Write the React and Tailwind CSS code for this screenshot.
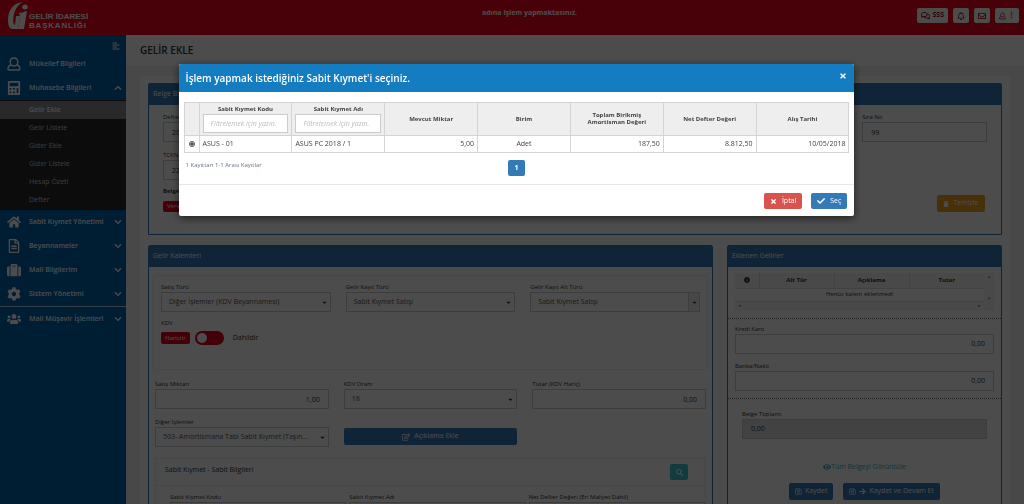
import React from 'react';
import {
  FaAlignLeft,
  FaArrowRight,
  FaCalculator,
  FaCaretDown,
  FaCheck,
  FaChevronDown,
  FaChevronUp,
  FaCog,
  FaEye,
  FaHome,
  FaInfoCircle,
  FaRegBell,
  FaRegComments,
  FaRegEdit,
  FaRegEnvelope,
  FaRegFileAlt,
  FaRegSave,
  FaSearch,
  FaSuitcase,
  FaTimes,
  FaTrash,
  FaUsers,
} from 'react-icons/fa';

const accountingLinks = ['Gelir Ekle', 'Gelir Listele', 'Gider Ekle', 'Gider Listele', 'Hesap Özeti', 'Defter'];

const lowerMenu = [
  { label: 'Sabit Kıymet Yönetimi', icon: FaHome },
  { label: 'Beyannameler', icon: FaRegFileAlt },
  { label: 'Mali Bilgilerim', icon: FaSuitcase },
  { label: 'Sistem Yönetimi', icon: FaCog },
  { label: 'Mali Müşavir İşlemleri', icon: FaUsers, separated: true },
];

const assetColumns = ['Mevcut Miktar', 'Birim', 'Toplam Birikmiş Amortisman Değeri', 'Net Defter Değeri', 'Alış Tarihi'];

function UserOutline({ size, className }) {
  return (
    <svg
      width={size}
      height={size}
      className={className}
      viewBox="0 0 14 14"
      fill="none"
      stroke="currentColor"
      strokeWidth="1.4"
      strokeLinejoin="round"
    >
      <path d="M7 1C4.6 1 3.2 2.6 3.2 4.8S4.6 9 7 9s3.8-2 3.8-4.2S9.4 1 7 1z" />
      <path d="M4.2 8C2 8.400 1 9.800 1 12c0 .6.4 1 1 1h10c.6 0 1-.4 1-1 0-2.200-1-3.600-3.200-4" />
    </svg>
  );
}

function Logo() {
  return (
    <a href="#" className="flex items-start gap-px text-white">
      <svg className="h-[28px] w-[20px]" viewBox="0 0 20 28" fill="currentColor">
        <path d="M15 0C5 1 0 8 0 18c0 5 1 8 4 9h6l2-13H8l-1 9c-2-1-2-4-1.500-7C6 9 9 3 15 0z" />
        <path d="M11 11c2 0 4-1 8-2l-3 18h-6l2-13z" />
        <ellipse cx="17" cy="5" rx="2.800" ry="2.500" />
      </svg>
      <span className="pt-[10px] font-['Liberation_Sans',sans-serif] text-[8px] leading-[9px] font-bold">
        GELİR İDARESİ
        <br />
        <span className="tracking-widest">BAŞKANLIĞI</span>
      </span>
    </a>
  );
}

function TopBar() {
  const button = 'flex h-[15px] items-center gap-0.5 rounded-xs bg-white px-1 text-[7px] font-bold text-[#a00018]';
  return (
    <header className="flex h-[35px] shrink-0 items-start bg-[#f00020] pr-[5px] pl-2">
      <div className="flex-1 pt-[2px]">
        <Logo />
      </div>
      <p className="pt-[7px] pl-8 text-[7px] leading-3 font-bold text-white">adına işlem yapmaktasınız.</p>
      <div className="flex flex-1 justify-end gap-[5px] pt-2">
        <button className={button}>
          <FaRegComments size={9} /> SSS
        </button>
        <button className={button} aria-label="Bildirimler">
          <FaRegBell size={8} />
        </button>
        <button className={button} aria-label="Mesajlar">
          <FaRegEnvelope size={8} />
        </button>
        <button className={`${button} w-6 justify-center`} aria-label="Kullanıcı">
          <UserOutline size={8} /> ⋮
        </button>
      </div>
    </header>
  );
}

function MenuItem({ label, icon: Icon, chevron: Chevron, separated }) {
  return (
    <a
      href="#"
      className={`flex items-center pr-1 pl-[7px] text-[7px] font-semibold ${separated ? 'h-[25px] border-t border-white/70' : 'h-6'}`}
    >
      <span className="flex w-[22px]">
        <Icon size={14} />
      </span>
      <span className="flex-1">{label}</span>
      {Chevron && <Chevron size={8} />}
    </a>
  );
}

function Sidebar() {
  return (
    <nav className="w-[126px] shrink-0 bg-[#0064ac] text-white">
      <div className="flex h-[17px] items-center justify-end pt-1 pr-1.5">
        <button aria-label="Menü">
          <FaAlignLeft size={8} />
        </button>
      </div>
      <MenuItem label="Mükellef Bilgileri" icon={UserOutline} />
      <MenuItem label="Muhasebe Bilgileri" icon={FaCalculator} chevron={FaChevronUp} />
      <ul className="bg-[#2a2a2a] py-px text-[7px] text-[#c8c8c8]">
        {accountingLinks.map((label, i) => (
          <li key={label}>
            <a
              href="#"
              className={`flex h-[18px] items-center pl-[29px] ${i === 0 ? 'bg-[#8a8a8a] font-semibold text-white' : ''}`}
            >
              {label}
            </a>
          </li>
        ))}
      </ul>
      {lowerMenu.map((item) => (
        <MenuItem key={item.label} {...item} chevron={FaChevronDown} />
      ))}
    </nav>
  );
}

function Panel({ title, className = '', children }) {
  return (
    <section className={`rounded-t-xs border border-[#337ab7] ${className}`}>
      <h2 className="flex h-[21px] items-center bg-[#337ab7] px-1 text-[7px] text-white">{title}</h2>
      {children}
    </section>
  );
}

function Field({ label, value, right, disabled }) {
  return (
    <label className="block">
      <span className="block h-[10px] text-[6px] leading-[10px]">{label}</span>
      <input
        defaultValue={value}
        disabled={disabled}
        className={`block h-5 w-full border border-[#ccc] px-2 text-[7px] ${right ? 'text-right' : ''} ${disabled ? 'bg-[#ddd]' : ''}`}
      />
    </label>
  );
}

function Select({ label, value, boxed }) {
  return (
    <label className="block min-w-0">
      <span className="block h-[10px] text-[6px] leading-[10px]">{label}</span>
      <span className="relative block">
        <select className="block h-5 w-full appearance-none truncate border border-[#ccc] pr-4 pl-[7px] text-[7px] text-[#555]">
          <option>{value}</option>
        </select>
        <span
          className={`pointer-events-none absolute inset-y-px right-px flex w-[11px] items-center justify-center ${boxed ? 'border-l border-[#ccc] bg-[#eee]' : ''}`}
        >
          <FaCaretDown size={7} />
        </span>
      </span>
    </label>
  );
}

function DocumentPanel() {
  return (
    <Panel title="Belge Bilgileri" className="h-[152px]">
      <div className="grid grid-cols-5 gap-x-[50px] px-[14px] pt-[7px]">
        <div>
          <Field label="Defter Türü" value="2018" />
          <div className="pt-2">
            <Field label="TCKN / VKN" value="2222" />
          </div>
          <p className="pt-[6px] text-[6px] leading-[10px] font-bold">Belge Türü</p>
          <span className="mt-[5px] block w-fit rounded-xs bg-[#e2001a] px-1 text-[6px] leading-[11px] text-white">
            Veresiye
          </span>
        </div>
        <div className="col-start-5 flex flex-col">
          <Field label="Sıra No" value="99" />
          <button className="mt-auto mr-[2px] flex h-[17px] w-12 items-center justify-center gap-1 self-end rounded-xs bg-[#f0a020] text-[7px] text-white">
            <FaTrash size={6} /> Temizle
          </button>
        </div>
      </div>
    </Panel>
  );
}

function IncomePanel() {
  return (
    <Panel title="Gelir Kalemleri" className="min-w-0 flex-1">
      <div className="mx-1 mt-2 h-[95px] border border-[#eee] px-[7px] pt-[6px]">
        <div className="grid grid-cols-3 gap-[15px]">
          <Select label="Satış Türü" value="Diğer İşlemler (KDV Beyannamesi)" />
          <Select label="Gelir Kayıt Türü" value="Sabit Kıymet Satışı" />
          <Select label="Gelir Kayıt Alt Türü" value="Sabit Kıymet Satışı" boxed />
        </div>
        <p className="pt-[6px] text-[6px] leading-[10px]">KDV</p>
        <label className="mt-[3px] flex items-center text-[7px]">
          <span className="rounded-xs bg-[#e2001a] px-1 text-[6px] leading-[12px] text-white">Hariçtir</span>
          <input
            type="checkbox"
            className="mx-[5px] h-[14px] w-[29px] appearance-none rounded-full bg-[#e2001a] p-[2px] before:block before:size-[10px] before:rounded-full before:bg-white"
          />
          <span className="pl-1">Dahildir</span>
        </label>
      </div>
      <div className="px-[6px] pt-[9px]">
        <div className="grid grid-cols-3 gap-x-[15px] gap-y-2">
          <Field label="Satış Miktarı" value="1,00" right />
          <Select label="KDV Oranı" value="18" />
          <Field label="Tutar (KDV Hariç)" value="0,00" right />
          <Select label="Diğer İşlemler" value="503- Amortismana Tabi Sabit Kıymet (Taşın..." />
          <button className="mb-[2px] flex h-[17px] items-center justify-center gap-1 self-end rounded-xs bg-[#337ab7] text-[7px] text-white">
            <FaRegEdit size={8} /> Açıklama Ekle
          </button>
        </div>
        <div className="mt-[11px] border border-[#eee]">
          <div className="flex h-[27px] items-center justify-between border-b border-[#eee] pr-[17px] pl-[9px]">
            <h3 className="pb-1 text-[7px]">Sabit Kıymet - Sabit Bilgileri</h3>
            <button className="flex h-4 w-[18px] items-center justify-center rounded-xs bg-[#36c6d3] text-white" aria-label="Ara">
              <FaSearch size={7} />
            </button>
          </div>
          <div className="grid grid-cols-3 gap-[3px] pt-[6px] pl-[14px]">
            <Field label="Sabit Kıymet Kodu" value="" />
            <Field label="Sabit Kıymet Adı" value="" />
            <Field label="Net Defter Değeri (Eri Maliyet Dahil)" value="" />
          </div>
        </div>
      </div>
    </Panel>
  );
}

function AddedPanel() {
  const action = 'flex h-[17px] items-center gap-[3px] rounded-xs bg-[#337ab7] px-[6px] text-[7px] text-white';
  return (
    <Panel title="Eklenen Gelirler" className="w-[275px] shrink-0">
      <div className="mx-[7px] mt-[6px] flex bg-[#f4f4f4]">
        <div className="flex-1">
          <table className="w-full table-fixed text-center text-[6px]">
            <thead>
              <tr className="h-[15px]">
                <th className="w-6">
                  <FaInfoCircle size={6} className="mx-auto" />
                </th>
                <th className="border-l border-[#ddd]">Alt Tür</th>
                <th className="border-l border-[#ddd]">Açıklama</th>
                <th className="border-l border-[#ddd]">Tutar</th>
              </tr>
            </thead>
            <tbody>
              <tr className="h-[13px] border-y border-[#ddd] bg-white">
                <td colSpan={4}>Henüz kalem eklenmedi</td>
              </tr>
            </tbody>
          </table>
          <div className="flex h-[9px] items-center justify-between px-[3px] text-[5px] text-[#888]">
            <span>◂</span>
            <span>▸</span>
          </div>
        </div>
        <div className="flex w-[10px] flex-col items-center justify-between pb-2 text-[5px] text-[#888]">
          <span>▴</span>
          <span>▾</span>
        </div>
      </div>
      <div className="mt-[7px] flex flex-col gap-[7px] border-y border-dotted border-[#777] px-[7px] pt-[5px] pb-[7px]">
        <Field label="Kredi Kartı" value="0,00" right />
        <Field label="Banka/Nakit" value="0,00" right />
      </div>
      <div className="px-[14px] pt-[10px]">
        <Field label="Belge Toplamı" value="0,00" disabled />
      </div>
      <a href="#" className="mt-[22px] flex items-center justify-center text-[7px] leading-3 text-[#2ab4c8]">
        <FaEye size={8} /> Tüm Belgeyi Görüntüle
      </a>
      <div className="mt-[10px] flex justify-center gap-[10px]">
        <button className={action}>
          <FaRegSave size={7} /> Kaydet
        </button>
        <button className={action}>
          <FaRegSave size={7} />
          <FaArrowRight size={7} /> Kaydet ve Devam Et
        </button>
      </div>
    </Panel>
  );
}

function FilterHeader({ label }) {
  return (
    <th className="border border-[#d4d4d4] px-[3px]">
      <label className="block">
        <span className="block leading-[9px]">{label}</span>
        <input
          placeholder="Filtrelemek için yazın."
          className="block h-[19px] w-full border border-[#ccc] bg-white px-[7px] text-[7px] font-normal italic placeholder:text-[#bbb]"
        />
      </label>
    </th>
  );
}

function AssetDialog() {
  const cell = 'border border-[#d4d4d4] px-[3px]';
  const action = 'flex h-4 items-center gap-[5px] rounded-xs px-[6px] text-[7px] text-white';
  return (
    <div className="fixed inset-0 flex items-start justify-center bg-black/70 pt-16">
      <div
        role="dialog"
        aria-labelledby="asset-title"
        className="ml-[9px] w-[66%] overflow-hidden rounded-xs bg-white shadow-[0_2px_8px_rgba(0,0,0,0.6)]"
      >
        <div className="flex h-7 items-center justify-between bg-[#147dc2] px-[7px] text-white">
          <h2 id="asset-title" className="text-[10px] font-semibold">
            İşlem yapmak istediğiniz Sabit Kıymet'i seçiniz.
          </h2>
          <button aria-label="Kapat" className="pb-1">
            <FaTimes size={8} />
          </button>
        </div>
        <div className="px-[5px] pt-[10px]">
          <table className="w-full table-fixed border-collapse text-[7px] text-[#444]">
            <thead>
              <tr className="h-[33px] bg-[#eee] text-[6px] leading-[7px]">
                <th className="w-[15px] border border-[#d4d4d4]" />
                <FilterHeader label="Sabit Kıymet Kodu" />
                <FilterHeader label="Sabit Kıymet Adı" />
                {assetColumns.map((label) => (
                  <th key={label} className="border border-[#d4d4d4] px-3">
                    {label}
                  </th>
                ))}
              </tr>
            </thead>
            <tbody>
              <tr className="h-[17px]">
                <td className="border border-[#d4d4d4]">
                  <input type="radio" name="asset" aria-label="ASUS - 01" defaultChecked className="mx-auto block size-[6px] accent-[#555]" />
                </td>
                <td className={cell}>ASUS - 01</td>
                <td className={cell}>ASUS PC 2018 / 1</td>
                <td className={`${cell} text-right`}>5,00</td>
                <td className={`${cell} text-center`}>Adet</td>
                <td className={`${cell} text-right`}>187,50</td>
                <td className={`${cell} text-right`}>8.812,50</td>
                <td className={`${cell} text-right`}>10/05/2018</td>
              </tr>
            </tbody>
          </table>
          <div className="grid h-[31px] grid-cols-3 px-[2px] pt-[7px]">
            <p className="text-[6px] leading-[10px] text-[#66758c]">1 Kayıttan 1-1 Arası Kayıtlar</p>
            <button className="h-4 w-[17px] justify-self-center rounded-xs bg-[#337ab7] text-[7px] font-bold text-white">1</button>
          </div>
        </div>
        <div className="flex justify-end gap-[9px] border-t border-[#e8e8e8] px-[7px] pt-2 pb-[7px]">
          <button className={`${action} bg-[#d9534f]`}>
            <FaTimes size={7} /> İptal
          </button>
          <button className={`${action} bg-[#337ab7]`}>
            <FaCheck size={8} /> Seç
          </button>
        </div>
      </div>
    </div>
  );
}

export default function App() {
  return (
    <div className="flex h-screen flex-col overflow-hidden bg-[#f0f0f0] font-['Open_Sans',sans-serif] text-[#333]">
      <TopBar />
      <div className="flex min-h-0 flex-1">
        <Sidebar />
        <main className="min-w-0 flex-1">
          <h1 className="flex h-[31px] items-center bg-white px-[14px] text-[10px] font-semibold">GELİR EKLE</h1>
          <div className="mx-[14px] mt-[10px] bg-white px-2 pt-[7px]">
            <DocumentPanel />
            <div className="mt-[10px] flex gap-[14px]">
              <IncomePanel />
              <AddedPanel />
            </div>
          </div>
        </main>
      </div>
      <AssetDialog />
    </div>
  );
}
